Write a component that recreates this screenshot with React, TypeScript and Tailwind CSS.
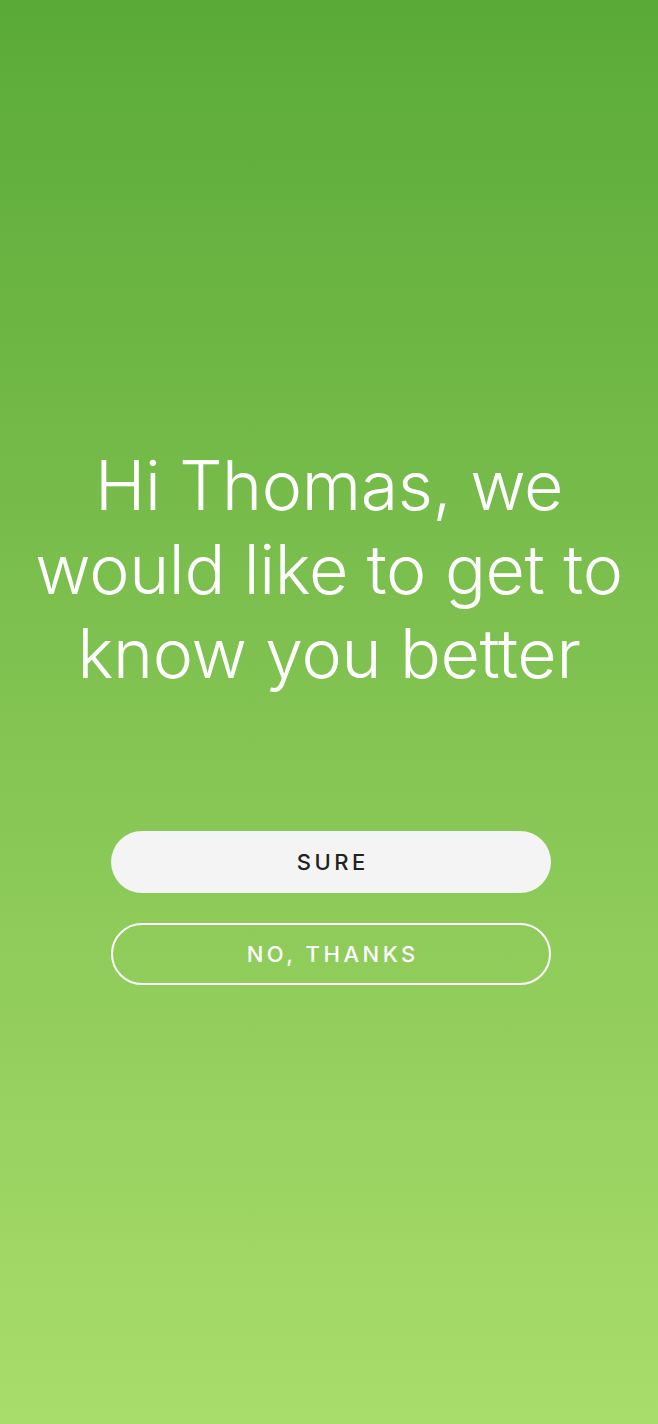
export default function App() {
  return (
    <div
      className="flex flex-col items-center w-full h-[1424px] bg-gradient-to-b from-[#5aaa38] to-[#a9dd6b] pt-[443px]"
      style={{ fontFamily: 'Inter, "Noto Sans", sans-serif' }}
    >
      <h1 className="text-white text-center font-light text-[68px] leading-[84px] tracking-[-0.005em]">
        Hi Thomas, we
        <br />
        would like to get to
        <br />
        know you better
      </h1>

      {/* actions */}
      <div className="flex flex-col gap-[30px] mt-[136px] ml-[4px] w-[440px]">
        <button className="h-[62px] rounded-full bg-[#f4f4f4] text-[#222222] text-[22px] font-medium tracking-[0.16em] pl-[0.16em]">
          SURE
        </button>
        <button className="h-[62px] rounded-full border-2 border-white text-white text-[22px] font-medium tracking-[0.16em] pl-[0.16em]">
          NO, THANKS
        </button>
      </div>
    </div>
  );
}
